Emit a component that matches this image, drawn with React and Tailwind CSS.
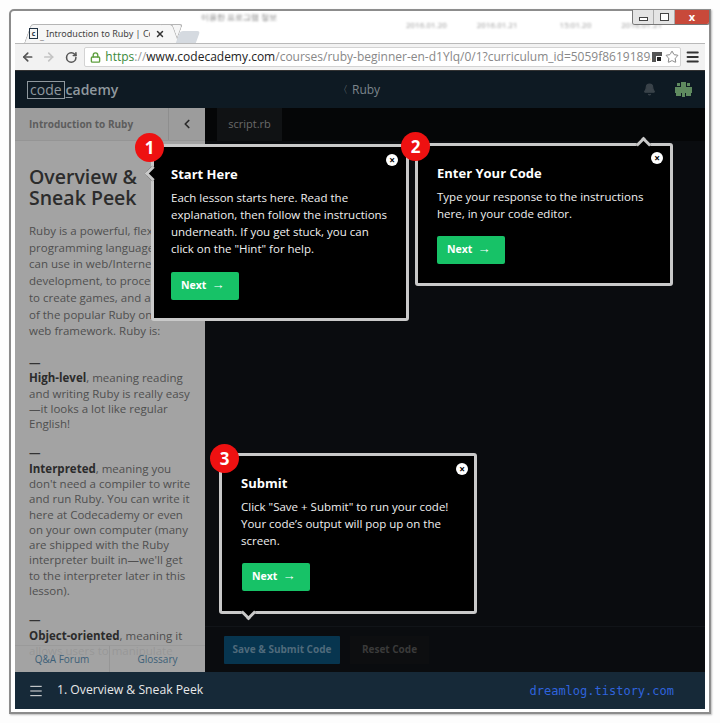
import { ArrowLeft, ArrowRight, Bell, ChevronLeft, Lock, Menu, RotateCw, Star, X } from 'lucide-react';

const FONT = { fontFamily: '"Open Sans", sans-serif' };

const Dash = () => <div className="font-bold text-[#333333]">—</div>;

const Para = ({ children }) => <p className="mb-[14px]">{children}</p>;

function Tip({ n, title, lines, box, badge, close, btn, arrow }) {
  return (
    <div className={`absolute z-10 border-[3px] border-[#c9c9c9] rounded-[3px] bg-black text-white ${box}`}>
      {arrow}
      <div className={`absolute w-[29px] h-[29px] rounded-full bg-[#ee1111] text-white flex items-center justify-center text-[17px] font-bold ${badge}`}>
        {n}
      </div>
      <div className={`absolute w-[12px] h-[12px] rounded-full bg-white flex items-center justify-center text-black text-[10px] font-bold leading-none ${close}`}>
        ×
      </div>
      <h3 className="text-[13px] font-bold leading-[18px]">{title}</h3>
      <div className="mt-[6px] text-[11.5px] leading-[17px] text-[#f0f0f0]">
        {lines.map((l) => (
          <div key={l} className="whitespace-nowrap">{l}</div>
        ))}
      </div>
      <div className={`w-[68px] h-[28px] rounded-[2px] bg-[#17c267] flex items-center pl-[10px] gap-[5px] text-[10.5px] font-bold ${btn}`}>
        <span>Next</span>
        <span className="font-normal text-[13px] leading-none -mt-[3px]">→</span>
      </div>
    </div>
  );
}

export default function App() {
  return (
    <div className="relative w-[720px] h-[723px] bg-[#fdfdfd] overflow-hidden pt-[9px] pl-[9px]" style={FONT}>
      <div className="relative w-[702px] h-[705px] border-2 border-[#8c8c8c] rounded-tl-[5px] bg-white flex flex-col px-[4px] pb-[3px] shadow-[1px_1px_2px_#bbbbbb]">
        {/* blurred stuff behind the glass */}
        <div className="absolute left-[190px] top-0 text-[8px] text-[#777777] blur-[1px] whitespace-nowrap">이용한 프로그램 정보</div>
        <div className="absolute left-[395px] top-[8px] flex gap-[30px] text-[8px] text-[#999999] blur-[1px] whitespace-nowrap">
          <span>2016.01.20</span><span>2016.01.21</span><span className="ml-[12px]">15:01.20</span><span>2016.01.21</span>
        </div>

        {/* window buttons */}
        <div className="absolute right-[-1px] top-[-1px] flex h-[15px] w-[78px] border border-[#777777] border-t-0 rounded-b-[3px] overflow-hidden">
          <div className="w-[21px] bg-[#e4e4e4] border-r border-[#aaaaaa] flex items-center justify-center">
            <div className="w-[9px] h-[4px] border border-[#444444] bg-white mt-[3px]" />
          </div>
          <div className="w-[21px] bg-[#e4e4e4] border-r border-[#aaaaaa] flex items-center justify-center">
            <div className="w-[9px] h-[8px] border border-[#444444] bg-white" />
          </div>
          <div className="flex-1 bg-[#c8493a] text-white text-[11px] font-bold leading-[13px] text-center">x</div>
        </div>

        {/* tab strip */}
        <div className="flex items-end h-[32px] shrink-0 pl-[9px]">
          <div className="relative w-[152px] h-[19px] flex items-center pl-[5px] gap-[2px]">
            <div className="absolute inset-0 bg-[#f6f6f6] border border-b-0 border-[#b5b5b5] rounded-t-[3px] -skew-x-[20deg] origin-bottom-left" />
            <div className="absolute top-0 bottom-0 right-0 w-[12px] bg-[#f6f6f6] border-r border-t border-[#b5b5b5] skew-x-[20deg] rounded-tr-[3px]" />
            <div className="relative shrink-0 w-[9px] h-[11px] border border-[#223344] text-[7px] leading-[9px] text-center text-[#223344] font-bold">c</div>
            <span className="relative shrink-0 text-[#777777] text-[9px] leading-none mt-[3px]">_</span>
            <span className="relative shrink-0 text-[9px] text-[#444444] whitespace-nowrap w-[104px] overflow-hidden" style={{ fontFamily: '"Noto Sans", sans-serif' }}>Introduction to Ruby | Co</span>
            <X size={10} strokeWidth={3.5} className="relative shrink-0 text-[#333333] ml-[3px]" />
          </div>
          <div className="w-[20px] h-[12px] ml-[2px] bg-[#d5dae0] rounded-t-[3px] -skew-x-[20deg]" />
        </div>

        {/* address bar */}
        <div className="flex items-center h-[27px] shrink-0 bg-[#f2f2f2] border-t border-[#b9b9b9] pl-[6px] pr-[5px]">
          <ArrowLeft size={14} strokeWidth={3} className="text-[#555555]" />
          <ArrowRight size={14} strokeWidth={3} className="text-[#c4c4c4] ml-[8px]" />
          <RotateCw size={13} strokeWidth={3} className="text-[#555555] ml-[9px]" />
          <div className="flex items-center ml-[7px] w-[621px] h-[20px] bg-white border border-[#d3d3d3] rounded-[2px] pl-[5px] pr-[1px] text-[12px] whitespace-nowrap overflow-hidden">
            <Lock size={11} strokeWidth={3} className="text-[#5f9f3f] shrink-0" />
            <div className="ml-[4px] w-[568px] overflow-hidden">
              <span className="text-[#3a8a3a]">https</span>
              <span className="text-[#999999]">://</span>
              <span className="text-[#222222]">www.codecademy.com</span>
              <span className="text-[#888888]">/courses/ruby-beginner-en-d1Ylq/0/1?curriculum_id=5059f8619189a5000</span>
            </div>
            <div className="relative w-[10px] h-[10px] bg-[#555555] shrink-0 ml-[1px]">
              <div className="absolute right-0 bottom-0 w-[6px] h-[6px] bg-[#222222] border border-white" />
            </div>
            <Star size={14} strokeWidth={1.5} className="text-[#777777] shrink-0 ml-[3px]" />
          </div>
          <Menu size={16} strokeWidth={3} className="text-[#333333] ml-[4px]" />
        </div>

        {/* codecademy app */}
        <div className="flex-1 flex flex-col min-h-0 border-t border-[#333333]">
          <div className="relative flex items-center h-[37px] shrink-0 bg-[#0e1a23] pl-[12px] pr-[13px]">
            <div className="flex items-center text-[#8f989e] text-[14px] leading-none">
              <span className="border border-[#8f989e] px-[2px] h-[18px] leading-[15px]">code</span>
              <span className="font-semibold ml-[1px]"><span className="underline underline-offset-2">c</span>ademy</span>
            </div>
            <div className="absolute left-[323px] flex items-center text-[12px] text-[#7d858b]">
              <span className="text-[10px] mr-[4px]">〈</span>Ruby
            </div>
            <Bell size={13} fill="#3a434a" className="text-[#3a434a] ml-auto mr-[19px]" />
            <svg width="17" height="16" viewBox="0 0 17 16" fill="#5f8a5f">
              <rect x="2" y="1" width="3" height="3" />
              <rect x="12" y="1" width="3" height="3" />
              <rect x="6" y="0" width="5" height="5" />
              <rect x="0" y="5" width="17" height="6" />
              <rect x="1" y="11" width="5" height="3" />
              <rect x="11" y="11" width="5" height="3" />
              <rect x="7" y="11" width="3" height="4" />
            </svg>
          </div>

          <div className="flex flex-1 min-h-0">
            {/* lesson panel */}
            <div className="relative w-[190px] shrink-0 bg-[#a3a3a3] flex flex-col overflow-hidden">
              <div className="flex items-center h-[33px] shrink-0 bg-[#9c9c9c] border-b border-[#959595]">
                <span className="flex-1 pl-[14px] text-[10px] font-bold text-[#5d5d5d]">Introduction to Ruby</span>
                <div className="w-[37px] h-full border-l border-[#8e8e8e] flex items-center justify-center">
                  <ChevronLeft size={14} strokeWidth={3} className="text-[#2b2b2b]" />
                </div>
              </div>
              <div className="flex-1 overflow-hidden pl-[14px] pr-[8px] pt-[25px] text-[11.5px] leading-[15.3px] text-[#4f4f4f] whitespace-nowrap">
                <h1 className="text-[19.5px] leading-[21px] font-semibold text-[#2c2c2c] mb-[15px]">Overview &<br />Sneak Peek</h1>
                <p className="mb-[15px] leading-[16.7px]">
                  Ruby is a powerful, flexible<br />programming language you<br />can use in web/Internet<br />development, to process text,<br />to create games, and as part<br />of the popular Ruby on Rails<br />web framework. Ruby is:
                </p>
                <Dash />
                <Para>
                  <b className="text-[#2b2b2b]">High-level</b>, meaning reading<br />and writing Ruby is really easy<br />—it looks a lot like regular<br />English!
                </Para>
                <Dash />
                <Para>
                  <b className="text-[#2b2b2b]">Interpreted</b>, meaning you<br />don't need a compiler to write<br />and run Ruby. You can write it<br />here at Codecademy or even<br />on your own computer (many<br />are shipped with the Ruby<br />interpreter built in—we'll get<br />to the interpreter later in this<br />lesson).
                </Para>
                <Dash />
                <p><b className="text-[#2b2b2b]">Object-oriented</b>, meaning it<br />allows users to manipulate</p>
              </div>
              <div className="absolute left-0 right-0 bottom-0 h-[27px] flex bg-[#a3a3a3]/85 border-t border-[#9a9a9a] text-[10px] text-[#3d5f78]">
                <div className="w-[95px] flex items-center justify-center border-r border-[#969696]">Q&amp;A Forum</div>
                <div className="flex-1 flex items-center justify-center">Glossary</div>
              </div>
            </div>

            {/* editor */}
            <div className="flex-1 flex flex-col bg-[#0a0c0f] min-w-0">
              <div className="h-[33px] shrink-0 bg-[#050607] pl-[12px]">
                <div className="w-[65px] h-full bg-[#101214] flex items-center justify-center text-[11px] text-[#6a6a6a]">script.rb</div>
              </div>
              <div className="flex-1" />
              <div className="flex items-center gap-[10px] h-[46px] shrink-0 pl-[19px] border-t border-[#111418]">
                <div className="w-[116px] h-[28px] bg-[#07354f] flex items-center justify-center text-[10px] font-bold text-[#4f6a7b] rounded-[1px]">Save &amp; Submit Code</div>
                <div className="w-[79px] h-[28px] bg-[#0d0e10] flex items-center justify-center text-[10px] font-bold text-[#3a3a3a]">Reset Code</div>
              </div>
            </div>
          </div>

          <div className="flex items-center h-[37px] shrink-0 bg-[#162938] pl-[13px] pr-[31px]">
            <Menu size={16} strokeWidth={1.5} className="text-[#e5e5e5]" />
            <span className="ml-[13px] text-[12.2px] text-[#e8e8e8]">1. Overview &amp; Sneak Peek</span>
            <span className="ml-auto text-[12px] text-[#2f63dd]" style={{ fontFamily: '"DejaVu Sans Mono", monospace' }}>dreamlog.tistory.com</span>
          </div>
        </div>
      </div>

      <Tip
        n="1"
        title="Start Here"
        lines={['Each lesson starts here. Read the', 'explanation, then follow the instructions', 'underneath. If you get stuck, you can', 'click on the "Hint" for help.']}
        box="left-[151px] top-[144px] w-[258px] h-[177px] pl-[17px] pt-[18px]"
        badge="left-[-19px] top-[-14px]"
        close="right-[8px] top-[7px]"
        btn="mt-[15px]"
        arrow={<div className="absolute left-[-7px] top-[21px] w-[11px] h-[11px] rotate-45 bg-black border-l-[3px] border-b-[3px] border-[#c9c9c9]" />}
      />
      <Tip
        n="2"
        title="Enter Your Code"
        lines={['Type your response to the instructions', 'here, in your code editor.']}
        box="left-[415px] top-[143px] w-[258px] h-[143px] pl-[19px] pt-[18px]"
        badge="left-[-17px] top-[-14px]"
        close="right-[7px] top-[6px]"
        btn="mt-[14px]"
        arrow={<div className="absolute right-[21px] top-[-7px] w-[11px] h-[11px] rotate-45 bg-black border-l-[3px] border-t-[3px] border-[#c9c9c9]" />}
      />
      <Tip
        n="3"
        title="Submit"
        lines={['Click "Save + Submit" to run your code!', 'Your code’s output will pop up on the', 'screen.']}
        box="left-[219px] top-[453px] w-[258px] h-[161px] pl-[19px] pt-[18px]"
        badge="left-[-12px] top-[-12px]"
        close="right-[6px] top-[7px]"
        btn="mt-[14px] ml-[1px]"
        arrow={<div className="absolute left-[21px] bottom-[-7px] w-[11px] h-[11px] rotate-45 bg-black border-r-[3px] border-b-[3px] border-[#c9c9c9]" />}
      />
    </div>
  );
}
